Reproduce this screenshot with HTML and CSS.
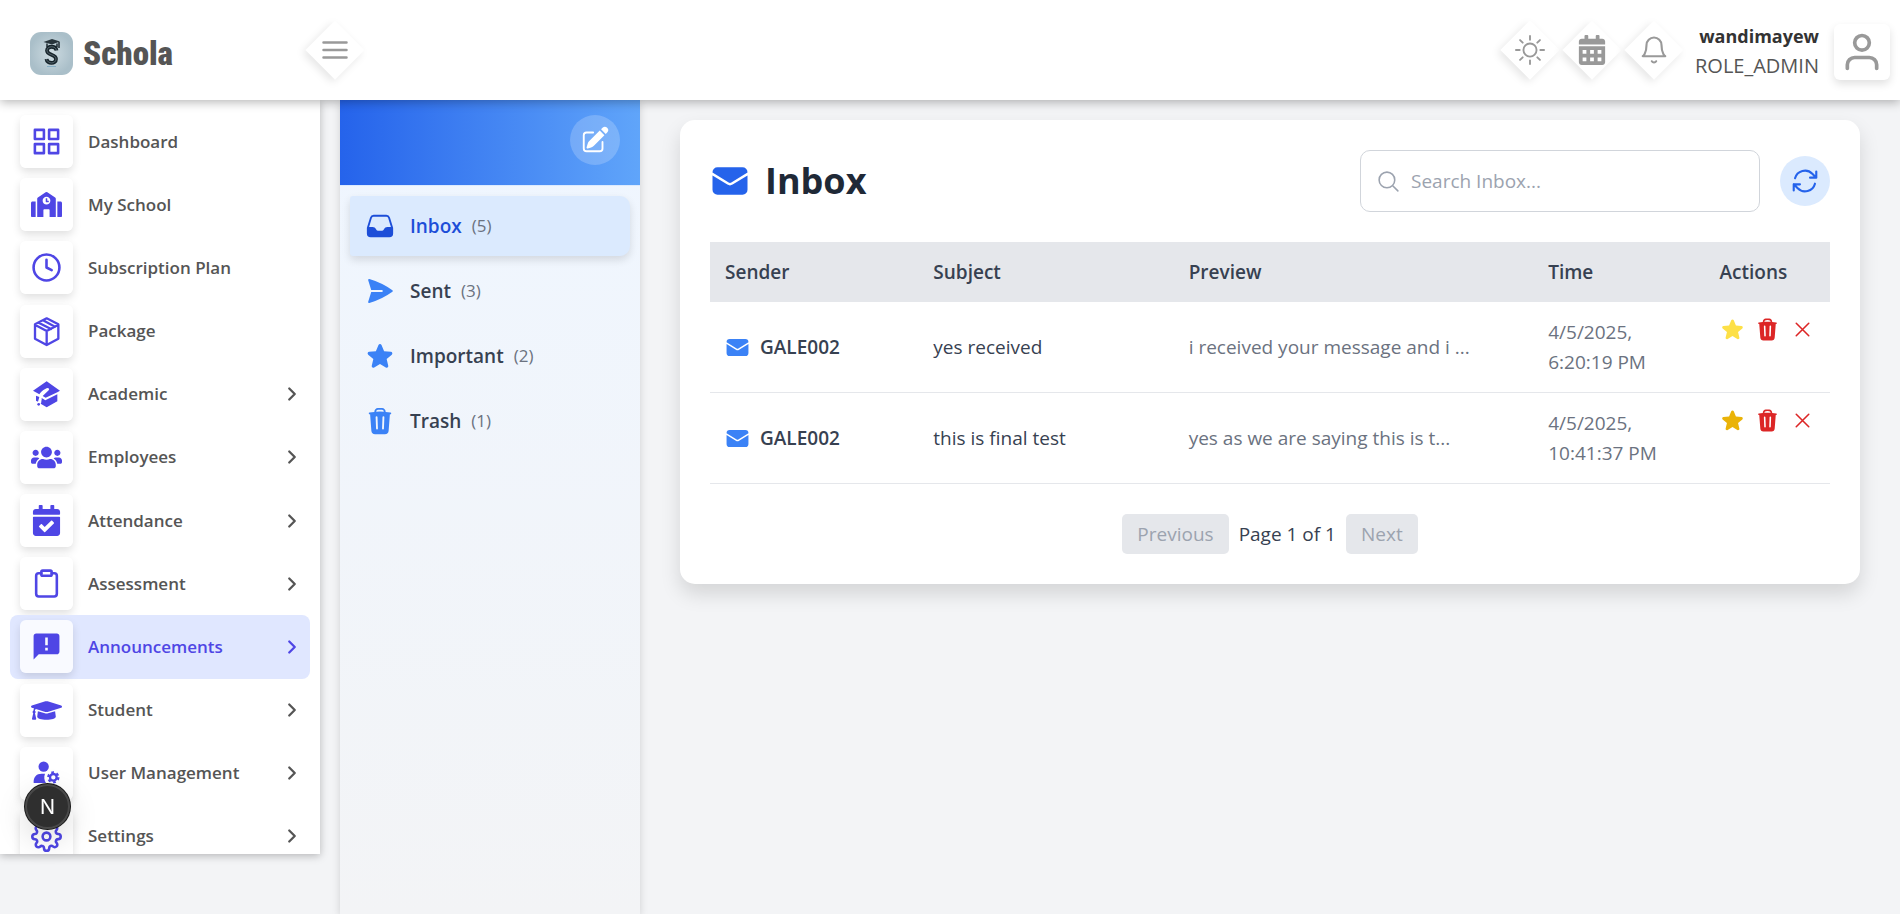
FILE: index.html
```html
<!DOCTYPE html>
<html lang="en">
<head>
<meta charset="utf-8">
<title>Schola - Inbox</title>
<link rel="stylesheet" href="styles.css">
</head>
<body>
<svg class="sprite" aria-hidden="true">
  <symbol id="chevron" viewBox="0 0 24 24"><path d="M9 18l6-6-6-6" fill="none" stroke="currentColor" stroke-width="2.5" stroke-linecap="round" stroke-linejoin="round"/></symbol>
  <symbol id="mail" viewBox="0 0 24 24"><path d="M1.5 8.67v8.58a3 3 0 003 3h15a3 3 0 003-3V8.67l-8.928 5.493a3 3 0 01-3.144 0L1.5 8.67z"/><path d="M22.5 6.908V6.75a3 3 0 00-3-3h-15a3 3 0 00-3 3v.158l9.714 5.978a1.5 1.5 0 001.572 0L22.5 6.908z"/></symbol>
  <symbol id="star" viewBox="0 0 24 24"><path d="M10.788 3.21c.448-1.077 1.976-1.077 2.424 0l2.082 5.007 5.404.433c1.164.093 1.636 1.545.749 2.305l-4.117 3.527 1.257 5.273c.271 1.136-.964 2.033-1.96 1.425L12 18.354 7.373 21.18c-.996.608-2.231-.29-1.96-1.425l1.257-5.273-4.117-3.527c-.887-.76-.415-2.212.749-2.305l5.404-.433 2.082-5.006z"/></symbol>
  <symbol id="trash" viewBox="0 0 24 24"><path fill-rule="evenodd" d="M16.5 4.478v.227a48.816 48.816 0 013.878.512.75.75 0 11-.256 1.478l-.209-.035-1.005 13.07a3 3 0 01-2.991 2.77H8.084a3 3 0 01-2.991-2.77L4.087 6.66l-.209.035a.75.75 0 01-.256-1.478A48.567 48.567 0 017.5 4.705v-.227c0-1.564 1.213-2.9 2.816-2.951a52.662 52.662 0 013.369 0c1.603.051 2.815 1.387 2.815 2.951zm-6.136-1.452a51.196 51.196 0 013.273 0C14.39 3.05 15 3.684 15 4.478v.113a49.488 49.488 0 00-6 0v-.113c0-.794.609-1.428 1.364-1.452zm-.355 5.945a.75.75 0 10-1.5.058l.347 9a.75.75 0 101.499-.058l-.346-9zm5.48.058a.75.75 0 10-1.498-.058l-.347 9a.75.75 0 001.5.058l.345-9z"/></symbol>
  <symbol id="close" viewBox="0 0 24 24"><path d="M6 18L18 6M6 6l12 12" fill="none" stroke="currentColor" stroke-width="1.5" stroke-linecap="round"/></symbol>
</svg>

<header class="topbar">
  <a class="brand" href="#">
    <svg class="brand-mark" viewBox="0 0 43 43" aria-hidden="true">
      <defs><radialGradient id="tile"><stop offset="0" stop-color="#cddbe1"/><stop offset="1" stop-color="#aabfc9"/></radialGradient></defs>
      <rect width="43" height="43" rx="11" fill="url(#tile)"/>
      <path d="M13.500 10L22 7l8 2.500-8 3z" fill="#27343b"/>
      <path d="M17 11.500v3h10v-3M29 10v6" fill="none" stroke="#27343b" stroke-width="1.600"/>
      <path d="M26.500 18.500c-.5-5-9.500-5-9.500 0 0 5 9 3.500 9 8.500 0 5.500-9 5-9.500 0" fill="none" stroke="#17242b" stroke-width="3.800"/>
      <path d="M26.500 18.500c-.5-5-9.500-5-9.500 0 0 5 9 3.500 9 8.500 0 5.500-9 5-9.500 0" fill="none" stroke="#8fa3ad" stroke-width=".5"/>
      <path d="M17 34.500h9" stroke="#86aec4"/>
    </svg>
    <span class="brand-name">Schola</span>
  </a>
  <button class="diamond" aria-label="Toggle menu"><svg viewBox="0 0 30 30" fill="none" stroke="currentColor" stroke-width="2.500" stroke-linecap="round"><path d="M3.500 7.500h23M3.500 15h23M3.500 22.500h23"/></svg></button>
  <div class="topbar-tools">
    <button class="diamond" aria-label="Theme"><svg viewBox="0 0 16 16" fill="none" stroke="currentColor" stroke-linecap="round"><circle cx="8" cy="8" r="3.500"/><path d="M8 .5v2M8 13.500v2M.5 8h2M13.500 8h2M2.700 2.700l1.400 1.400M11.900 11.900l1.400 1.400M2.700 13.300l1.400-1.400M11.900 4.100l1.400-1.400"/></svg></button>
    <button class="diamond" aria-label="Calendar"><svg viewBox="0 0 448 512" fill="currentColor"><path fill-rule="evenodd" d="M0 464c0 26.500 21.500 48 48 48h352c26.500 0 48-21.500 48-48V192H0zM64 256h64v64H64zM192 256h64v64h-64zM320 256h64v64h-64zM64 384h64v64H64zM192 384h64v64h-64zM320 384h64v64h-64zM0 160v-48c0-26.500 21.500-48 48-48h48V16q0-16 16-16h32q16 0 16 16v48h128V16q0-16 16-16h32q16 0 16 16v48h48c26.500 0 48 21.500 48 48v48z"/></svg></button>
    <button class="diamond" aria-label="Notifications"><svg viewBox="0 0 24 24" fill="none" stroke="currentColor" stroke-width="1.700" stroke-linecap="round" stroke-linejoin="round"><path d="M18 8A6 6 0 0 0 6 8c0 7-3 9-3 9h18s-3-2-3-9M13.730 21a2 2 0 0 1-3.460 0"/></svg></button>
    <div class="account"><strong>wandimayew</strong><span>ROLE_ADMIN</span></div>
    <button class="avatar" aria-label="Profile"><svg viewBox="0 0 24 24" fill="none" stroke="currentColor" stroke-width="2" stroke-linecap="round" stroke-linejoin="round"><path d="M20 21v-2a4 4 0 0 0-4-4H8a4 4 0 0 0-4 4v2"/><circle cx="12" cy="7" r="4"/></svg></button>
  </div>
</header>

<div class="shell">
  <nav class="sidebar" aria-label="Main">
    <div class="menu">
      <a class="menu-item" href="#"><span class="tile"><svg viewBox="0 0 24 24" class="line"><path d="M3 3h7v7H3zM14 3h7v7h-7zM14 14h7v7h-7zM3 14h7v7H3z"/></svg></span>Dashboard</a>
      <a class="menu-item" href="#"><span class="tile"><svg viewBox="0 0 640 512"><path d="M0 224v272c0 8.840 7.160 16 16 16h80V192H32c-17.670 0-32 14.330-32 32zm360-48h-24v-40c0-4.420-3.580-8-8-8h-16c-4.420 0-8 3.580-8 8v64c0 4.420 3.580 8 8 8h48c4.420 0 8-3.580 8-8v-16c0-4.420-3.580-8-8-8zm137.750-63.960l-160-106.670a32.020 32.020 0 0 0-35.500 0l-160 106.670A32.002 32.002 0 0 0 128 138.660V512h128V368c0-8.840 7.160-16 16-16h96c8.840 0 16 7.160 16 16v144h128V138.670c0-10.700-5.350-20.690-14.250-26.630zM320 256c-44.180 0-80-35.820-80-80s35.820-80 80-80 80 35.820 80 80-35.820 80-80 80zm288-64h-64v320h80c8.840 0 16-7.160 16-16V224c0-17.670-14.330-32-32-32z"/></svg></span>My School</a>
      <a class="menu-item" href="#"><span class="tile"><svg viewBox="0 0 24 24" class="line"><circle cx="12" cy="12" r="10"/><path d="M12 6v6l4 2"/></svg></span>Subscription Plan</a>
      <a class="menu-item" href="#"><span class="tile"><svg viewBox="93 648 93 93" class="line heavy"><path d="M140 655l35 18v43l-35 19-35-19v-43zM106 675l34 18 34-18M140 694v40M116 668l37 19M129 661l36 19"/></svg></span>Package</a>
      <a class="menu-item" href="#"><span class="tile"><svg viewBox="93 86 93 93"><path d="M140 93l40 28-8 5-35 16-9-5 18-17c5-5-3-9-9-5-10 5-16 11-19 17l-19-11z"/><path d="M108 136l10 4-4 14-6-3zM125 143l11 7 36-18v21l-32 18-18-11 3-6z"/><circle cx="116" cy="162" r="4"/><path d="M124 150l6 4-5 4z"/></svg></span>Academic<svg class="chev"><use href="#chevron"/></svg></a>
      <a class="menu-item" href="#"><span class="tile"><svg viewBox="0 0 640 512"><path d="M96 224c35.300 0 64-28.700 64-64s-28.700-64-64-64-64 28.700-64 64 28.700 64 64 64zm448 0c35.300 0 64-28.700 64-64s-28.700-64-64-64-64 28.700-64 64 28.700 64 64 64zm32 32h-64c-17.600 0-33.500 7.100-45.100 18.600 40.300 22.100 68.900 62 75.100 109.400h66c17.700 0 32-14.300 32-32v-32c0-35.300-28.700-64-64-64zm-256 0c61.900 0 112-50.100 112-112S381.900 32 320 32 208 82.100 208 144s50.100 112 112 112zm76.800 32h-8.300c-20.800 10-43.900 16-68.500 16s-47.600-6-68.500-16h-8.300C179.600 288 128 339.600 128 403.200V432c0 26.500 21.500 48 48 48h288c26.500 0 48-21.500 48-48v-28.800c0-63.600-51.600-115.200-115.200-115.200zm-223.700-13.400C161.500 263.100 145.600 256 128 256H64c-35.300 0-64 28.700-64 64v32c0 17.700 14.300 32 32 32h65.900c6.300-47.400 34.900-87.300 75.200-109.400z"/></svg></span>Employees<svg class="chev"><use href="#chevron"/></svg></a>
      <a class="menu-item" href="#"><span class="tile"><svg viewBox="0 0 448 512"><path d="M436 160H12c-6.627 0-12-5.373-12-12v-36c0-26.510 21.490-48 48-48h48V12c0-6.627 5.373-12 12-12h40c6.627 0 12 5.373 12 12v52h128V12c0-6.627 5.373-12 12-12h40c6.627 0 12 5.373 12 12v52h48c26.510 0 48 21.490 48 48v36c0 6.627-5.373 12-12 12zM12 192h424c6.627 0 12 5.373 12 12v260c0 26.510-21.490 48-48 48H48c-26.510 0-48-21.490-48-48V204c0-6.627 5.373-12 12-12zm333.296 95.947l-28.169-28.398c-4.667-4.705-12.265-4.736-16.970-.068L194.120 364.665l-45.980-46.352c-4.667-4.705-12.266-4.736-16.971-.068l-28.397 28.170c-4.705 4.667-4.736 12.265-.068 16.970l82.601 83.269c4.667 4.705 12.265 4.736 16.970.068l142.953-141.805c4.705-4.667 4.736-12.265.068-16.970z"/></svg></span>Attendance<svg class="chev"><use href="#chevron"/></svg></a>
      <a class="menu-item" href="#"><span class="tile"><svg viewBox="0 0 24 24" class="line"><path d="M16 4h2a2 2 0 0 1 2 2v14a2 2 0 0 1-2 2H6a2 2 0 0 1-2-2V6a2 2 0 0 1 2-2h2"/><rect x="8" y="2" width="8" height="4" rx="1"/></svg></span>Assessment<svg class="chev"><use href="#chevron"/></svg></a>
      <a class="menu-item active" href="#" aria-current="page"><span class="tile"><svg viewBox="0 0 24 24"><path fill-rule="evenodd" d="M20 2H4c-1.100 0-1.990.9-1.990 2L2 22l4-4h14c1.100 0 2-.9 2-2V4c0-1.100-.9-2-2-2zm-7 9h-2V5h2v6zm0 4h-2v-2h2v2z"/></svg></span>Announcements<svg class="chev"><use href="#chevron"/></svg></a>
      <a class="menu-item" href="#"><span class="tile"><svg viewBox="0 0 640 512"><path d="M622.340 153.200L343.400 67.500c-15.200-4.670-31.600-4.670-46.790 0L17.660 153.200c-23.540 7.230-23.540 38.360 0 45.590l48.630 14.940c-10.670 13.190-17.230 29.280-17.880 46.900C38.780 266.150 32 276.110 32 288c0 10.780 5.680 19.850 13.860 25.650L20.330 428.530C18.110 438.520 25.710 448 35.940 448h56.110c10.240 0 17.840-9.480 15.620-19.470L82.140 313.650C90.320 307.850 96 298.780 96 288c0-11.570-6.470-21.250-15.660-26.870.76-15.020 8.440-28.300 20.690-36.720L296.600 284.500c9.060 2.780 26.440 6.250 46.790 0l278.950-85.700c23.550-7.240 23.550-38.360 0-45.600zM352.790 315.090c-28.530 8.760-52.840 3.920-65.590 0l-145.020-44.550L128 384c0 35.350 85.960 64 192 64s192-28.650 192-64l-14.180-113.470-145.030 44.560z"/></svg></span>Student<svg class="chev"><use href="#chevron"/></svg></a>
      <a class="menu-item" href="#"><span class="tile"><svg viewBox="93 481 93 93"><circle cx="131" cy="507" r="15.500"/><path d="M101 556c-1-18 8-28 24-28h10c-4 10-2 20 3 28z"/><circle cx="160" cy="539" r="10" fill="none" stroke="currentColor" stroke-width="7"/><circle cx="160" cy="539" r="15" fill="none" stroke="currentColor" stroke-width="7" stroke-dasharray="7.850 7.850"/></svg></span>User Management<svg class="chev"><use href="#chevron"/></svg></a>
      <a class="menu-item" href="#"><span class="tile"><svg viewBox="0 0 24 24" class="line"><circle cx="12" cy="12" r="3"/><path d="M19.400 15a1.650 1.650 0 0 0 .33 1.820l.06.06a2 2 0 0 1 0 2.830 2 2 0 0 1-2.830 0l-.06-.06a1.650 1.650 0 0 0-1.820-.33 1.650 1.650 0 0 0-1 1.510V21a2 2 0 0 1-2 2 2 2 0 0 1-2-2v-.09A1.650 1.650 0 0 0 9 19.400a1.650 1.650 0 0 0-1.820.33l-.06.06a2 2 0 0 1-2.830 0 2 2 0 0 1 0-2.830l.06-.06a1.650 1.650 0 0 0 .33-1.820 1.650 1.650 0 0 0-1.510-1H3a2 2 0 0 1-2-2 2 2 0 0 1 2-2h.09A1.650 1.650 0 0 0 4.600 9a1.650 1.650 0 0 0-.33-1.820l-.06-.06a2 2 0 0 1 0-2.830 2 2 0 0 1 2.830 0l.06.06a1.650 1.650 0 0 0 1.820.33H9a1.650 1.650 0 0 0 1-1.510V3a2 2 0 0 1 2-2 2 2 0 0 1 2 2v.09a1.650 1.650 0 0 0 1 1.510 1.650 1.650 0 0 0 1.820-.33l.06-.06a2 2 0 0 1 2.830 0 2 2 0 0 1 0 2.830l-.06.06a1.650 1.650 0 0 0-.33 1.820V9a1.650 1.650 0 0 0 1.510 1H21a2 2 0 0 1 2 2 2 2 0 0 1-2 2h-.09a1.650 1.650 0 0 0-1.510 1z"/></svg></span>Settings<svg class="chev"><use href="#chevron"/></svg></a>
    </div>
  </nav>

  <aside class="folders">
    <div class="folders-head">
      <button class="compose" aria-label="Compose"><svg viewBox="0 0 24 24"><path d="M21.731 2.269a2.625 2.625 0 00-3.712 0l-1.157 1.157 3.712 3.712 1.157-1.157a2.625 2.625 0 000-3.712zM19.513 8.199l-3.712-3.712-8.400 8.400a5.250 5.250 0 00-1.320 2.214l-.8 2.685a.75.75 0 00.933.933l2.685-.8a5.250 5.250 0 002.214-1.320l8.400-8.400z"/><path d="M5.250 5.250a3 3 0 00-3 3v10.500a3 3 0 003 3h10.500a3 3 0 003-3V13.500a.75.75 0 00-1.500 0v5.250a1.500 1.500 0 01-1.500 1.500H5.250a1.500 1.500 0 01-1.500-1.500V8.250a1.500 1.500 0 011.500-1.500h5.250a.75.75 0 000-1.500H5.250z"/></svg></button>
    </div>
    <div class="folder-list">
      <a class="folder active" href="#"><svg viewBox="0 0 24 24"><path fill-rule="evenodd" d="M6.912 3a3 3 0 00-2.868 2.118l-2.411 7.838a3 3 0 00-.133.882V18a3 3 0 003 3h15a3 3 0 003-3v-4.162c0-.299-.045-.596-.133-.882l-2.412-7.838A3 3 0 0017.088 3H6.912zm13.823 9.750l-2.213-7.191A1.500 1.500 0 0017.088 4.500H6.912a1.500 1.500 0 00-1.434 1.059L3.265 12.750H6.110a3 3 0 012.684 1.658l.256.513a1.500 1.500 0 001.342.829h3.218a1.500 1.500 0 001.342-.83l.256-.512a3 3 0 012.684-1.658h2.844z"/></svg><span>Inbox</span><small>(5)</small></a>
      <a class="folder" href="#"><svg viewBox="0 0 24 24"><path d="M3.478 2.405a.75.75 0 00-.926.94l2.432 7.905H13.500a.75.75 0 010 1.500H4.984l-2.432 7.905a.75.75 0 00.926.94 60.519 60.519 0 0018.445-8.986.75.75 0 000-1.218A60.517 60.517 0 003.478 2.405z"/></svg><span>Sent</span><small>(3)</small></a>
      <a class="folder" href="#"><svg><use href="#star"/></svg><span>Important</span><small>(2)</small></a>
      <a class="folder" href="#"><svg><use href="#trash"/></svg><span>Trash</span><small>(1)</small></a>
    </div>
  </aside>

  <main class="content">
    <section class="card">
      <div class="card-head">
        <h1><svg><use href="#mail"/></svg>Inbox</h1>
        <label class="search">
          <svg viewBox="0 0 24 24" fill="none" stroke="currentColor" stroke-width="1.500" stroke-linecap="round"><path d="M21 21l-5.197-5.197m0 0A7.500 7.500 0 105.196 5.196a7.500 7.500 0 0010.607 10.607z"/></svg>
          <input type="text" placeholder="Search Inbox..." aria-label="Search Inbox">
        </label>
        <button class="refresh" aria-label="Refresh"><svg viewBox="0 0 24 24" fill="none" stroke="currentColor" stroke-width="1.700" stroke-linecap="round" stroke-linejoin="round"><path d="M16.023 9.348h4.992v-.001M2.985 19.644v-4.992m0 0h4.992m-4.993 0l3.181 3.183a8.250 8.250 0 0013.803-3.700M4.031 9.865a8.250 8.250 0 0113.803-3.700l3.181 3.182m0-4.991v4.990"/></svg></button>
      </div>
      <table class="mails">
        <colgroup><col class="c-sender"><col class="c-subject"><col class="c-preview"><col class="c-time"><col class="c-actions"></colgroup>
        <thead><tr><th>Sender</th><th>Subject</th><th>Preview</th><th>Time</th><th>Actions</th></tr></thead>
        <tbody>
          <tr>
            <td><div class="sender"><svg><use href="#mail"/></svg>GALE002</div></td>
            <td>yes received</td>
            <td class="muted">i received your message and i ...</td>
            <td class="muted">4/5/2025,<br>6:20:19 PM</td>
            <td class="actions-cell"><div class="actions"><button class="star pale" aria-label="Mark important"><svg><use href="#star"/></svg></button><button class="danger" aria-label="Move to trash"><svg><use href="#trash"/></svg></button><button class="danger" aria-label="Delete"><svg><use href="#close"/></svg></button></div></td>
          </tr>
          <tr>
            <td><div class="sender"><svg><use href="#mail"/></svg>GALE002</div></td>
            <td>this is final test</td>
            <td class="muted">yes as we are saying this is t...</td>
            <td class="muted">4/5/2025,<br>10:41:37 PM</td>
            <td class="actions-cell"><div class="actions"><button class="star" aria-label="Mark important"><svg><use href="#star"/></svg></button><button class="danger" aria-label="Move to trash"><svg><use href="#trash"/></svg></button><button class="danger" aria-label="Delete"><svg><use href="#close"/></svg></button></div></td>
          </tr>
        </tbody>
      </table>
      <div class="pager"><button disabled>Previous</button><span>Page 1 of 1</span><button disabled>Next</button></div>
    </section>
  </main>
</div>
<button class="dev-badge" aria-label="Developer tools">N</button>
</body>
</html>
```
FILE: styles.css
```css
* { box-sizing: border-box; }
body {
  margin: 0;
  height: 100vh;
  display: flex;
  flex-direction: column;
  overflow: hidden;
  background: #f3f4f6;
  color: #374151;
  font: 19px/30px "Open Sans", "Noto Sans", sans-serif;
}
a { color: inherit; text-decoration: none; }
button { margin: 0; padding: 0; border: 0; background: none; font: inherit; color: inherit; cursor: pointer; }
svg { display: block; fill: currentColor; flex: none; }
svg[fill="none"] { fill: none; }
.sprite { position: absolute; width: 0; height: 0; }

.topbar {
  flex: none;
  height: 100px;
  display: flex;
  align-items: center;
  padding: 0 10px 0 30px;
  background: #fff;
  box-shadow: 0 2px 10px rgba(0, 0, 0, .3);
  z-index: 2;
}
.brand { display: flex; align-items: center; gap: 10px; width: 284px; padding-top: 7px; color: #555; }
.brand-mark { width: 43px; height: 43px; }
.brand-name { font: 900 33px/40px "Roboto Condensed", Lato, sans-serif; }
.diamond {
  width: 42px;
  height: 42px;
  display: grid;
  place-items: center;
  transform: rotate(45deg);
  background: #fff;
  color: #999;
  box-shadow: 0 4px 8px rgba(0, 0, 0, .1);
}
.diamond svg { width: 30px; height: 30px; transform: rotate(-45deg); }
.topbar-tools { display: flex; align-items: center; gap: 20px; margin-left: auto; }
.account { display: flex; flex-direction: column; align-items: flex-end; padding-top: 2px; color: #555; font-size: 20px; }
.account strong { color: #333; font-size: 18px; }
.avatar {
  width: 56px;
  height: 56px;
  margin: 4px 0 0 -5px;
  display: grid;
  place-items: center;
  border-radius: 6px;
  color: #999;
  background: #fff;
  box-shadow: 0 4px 8px rgba(0, 0, 0, .12);
}
.avatar svg { width: 44px; height: 44px; }

.shell { flex: 1; min-height: 0; display: flex; align-items: stretch; }
.sidebar {
  flex: none;
  width: 320px;
  height: calc(100vh - 160px);
  padding: 10px;
  overflow: hidden;
  background: #fff;
  box-shadow: 0 2px 8px rgba(0, 0, 0, .25);
}
.menu { display: grid; grid-auto-rows: 1fr; height: 758px; }
.menu-item {
  display: flex;
  align-items: center;
  gap: 15px;
  padding: 0 7px 0 10px;
  border-radius: 8px;
  color: #555;
  font-size: 17px;
  font-weight: 600;
}
.menu-item.active { background: #e0e7ff; color: #4f46e5; }
.tile {
  width: 53px;
  height: 53px;
  display: grid;
  place-items: center;
  border-radius: 6px;
  color: #4f46e5;
  background: rgba(255, 255, 255, .8);
  box-shadow: 0 4px 8px rgba(0, 0, 0, .12);
}
.tile svg { width: 31px; height: 31px; }
.tile .line { fill: none; stroke: currentColor; stroke-width: 2; stroke-linecap: round; stroke-linejoin: round; }
.tile .heavy { stroke-width: 7; }
.chev { width: 22px; height: 22px; margin-left: auto; }

.folders {
  flex: none;
  width: 300px;
  margin-left: 20px;
  background: linear-gradient(#eff6ff, #f3f4f6);
  box-shadow: 0 2px 8px rgba(0, 0, 0, .15);
}
.folders-head {
  height: 86px;
  display: flex;
  justify-content: flex-end;
  padding: 15px 20px;
  border-bottom: 1px solid #dbeafe;
  background: linear-gradient(to right, #2563eb, #60a5fa);
  background-clip: padding-box;
}
.compose {
  width: 50px;
  height: 50px;
  display: grid;
  place-items: center;
  border-radius: 50%;
  color: #fff;
  background: rgba(255, 255, 255, .2);
}
.compose svg { width: 30px; height: 30px; }
.folder-list { display: grid; gap: 5px; padding: 10px; }
.folder {
  height: 60px;
  display: flex;
  align-items: center;
  padding: 0 15px;
  border-radius: 3px 10px 10px 3px;
  font-weight: 600;
}
.folder svg { width: 30px; height: 30px; margin-right: 15px; color: #3b82f6; }
.folder small { margin-left: 10px; font-size: 17px; font-weight: 400; color: #6b7280; }
.folder.active { background: #dbeafe; box-shadow: 0 4px 8px rgba(0, 0, 0, .12); }
.folder.active span, .folder.active svg { color: #1d4ed8; }

.content { flex: 1; min-width: 0; padding: 20px 40px; }
.card {
  padding: 30px;
  border-radius: 15px;
  background: #fff;
  box-shadow: 0 10px 20px rgba(0, 0, 0, .13);
}
.card-head { display: flex; align-items: center; gap: 20px; margin-bottom: 30px; }
h1 {
  display: flex;
  align-items: center;
  gap: 15px;
  margin: 0 auto 0 0;
  color: #1f2937;
  font-size: 36px;
  line-height: 50px;
}
h1 svg { width: 40px; height: 40px; color: #2563eb; }
.search {
  width: 400px;
  height: 62px;
  display: flex;
  align-items: center;
  gap: 10px;
  padding: 0 15px;
  border: 1px solid #d1d5db;
  border-radius: 10px;
  color: #9ca3af;
}
.search svg { width: 25px; height: 25px; }
.search input { flex: 1; min-width: 0; padding: 0; border: 0; outline: 0; background: none; font: inherit; color: #374151; }
.search input::placeholder { color: #9ca3af; opacity: 1; }
.refresh {
  width: 50px;
  height: 50px;
  display: grid;
  place-items: center;
  border-radius: 50%;
  color: #2563eb;
  background: #dbeafe;
}
.refresh svg { width: 30px; height: 30px; }

.mails { width: 100%; table-layout: fixed; border-collapse: separate; border-spacing: 0; }
.c-sender { width: 18.600%; }
.c-subject { width: 22.800%; }
.c-preview { width: 32.100%; }
.c-time { width: 15.300%; }
.mails th { height: 60px; padding: 15px; background: #e5e7eb; text-align: left; font-weight: 600; }
.mails td { height: 91px; padding: 15px; border-bottom: 1px solid #e5e7eb; white-space: nowrap; }
.mails .muted { color: #6b7280; }
.sender { display: flex; align-items: center; gap: 10px; font-weight: 600; }
.sender svg { width: 25px; height: 25px; color: #3b82f6; }
.mails .actions-cell { vertical-align: top; }
.actions { display: flex; gap: 10px; }
.actions svg { width: 25px; height: 25px; }
.star { color: #eab308; }
.star.pale { color: #fde047; }
.danger { color: #dc2626; }
.pager { display: flex; justify-content: center; align-items: center; gap: 10px; margin-top: 30px; }
.pager button { height: 40px; padding: 0 15px; border-radius: 5px; background: #e5e7eb; color: #9ca3af; }

.dev-badge {
  position: fixed;
  left: 25px;
  bottom: 85px;
  z-index: 3;
  width: 45px;
  height: 45px;
  border: 2px solid #494949;
  border-radius: 50%;
  background: #2f2f2f;
  color: #fff;
  font: 400 20px/40px Inter, sans-serif;
  box-shadow: 0 0 0 1px #171717, 0 10px 30px rgba(0, 0, 0, .15);
}
```
